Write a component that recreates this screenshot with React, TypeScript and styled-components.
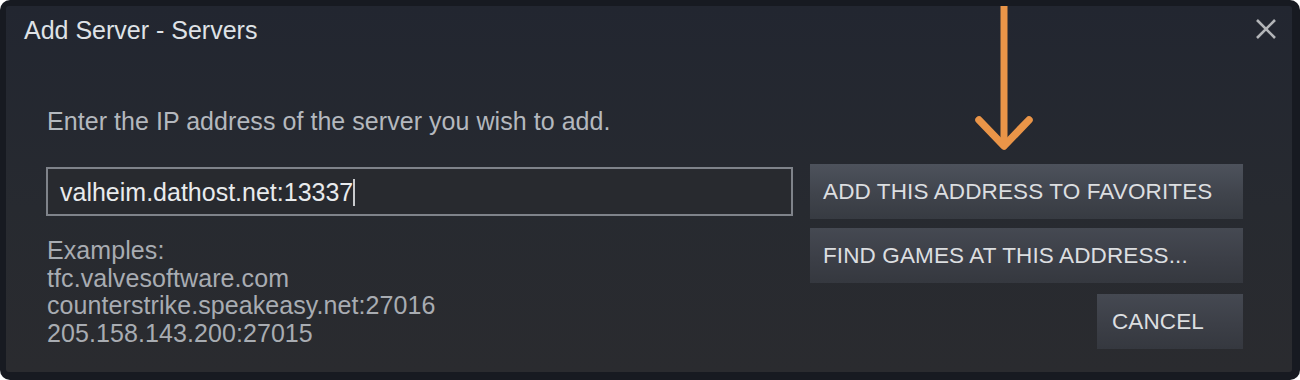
import React from "react";
import styled, { createGlobalStyle } from "styled-components";

const GlobalStyle = createGlobalStyle`
  html, body {
    margin: 0;
    padding: 0;
    background: #ffffff;
  }
  * { box-sizing: border-box; }
`;

const Frame = styled.div`
  width: 1300px;
  height: 380px;
  background: #171a21;
  border-radius: 10px;
  padding: 6px 8px 8px 6px;
  font-family: "Liberation Sans", Arial, sans-serif;
`;

const Panel = styled.div`
  position: relative;
  height: 100%;
  border-radius: 3px;
  background: linear-gradient(to bottom, #222630 0%, #272a30 55%, #2a2b2f 100%);
  display: flex;
  flex-direction: column;
`;

const Header = styled.div`
  display: flex;
  justify-content: space-between;
  align-items: flex-start;
  padding: 12px 15px 0 18px;
  height: 37px;
`;

const Title = styled.div`
  font-size: 25px;
  line-height: 25px;
  color: #dfe2e6;
`;

const CloseButton = styled.div`
  width: 22px;
  height: 22px;
  display: flex;
  align-items: center;
  justify-content: center;
  color: #b3b5b8;
`;

const Body = styled.div`
  padding: 0 49px 0 40px;
  display: flex;
  flex-direction: column;
`;

const Prompt = styled.div`
  margin-top: 66px;
  padding-left: 1px;
  font-size: 25px;
  line-height: 25px;
  letter-spacing: 0.05px;
  color: #b4b8be;
`;

const Row = styled.div`
  margin-top: 30px;
  display: flex;
  align-items: flex-start;
  gap: 17px;
`;

const LeftColumn = styled.div`
  width: 747px;
  display: flex;
  flex-direction: column;
`;

const AddressField = styled.div`
  margin-top: 3px;
  height: 49px;
  border: 2px solid #7f838a;
  background: #282a2f;
  display: flex;
  align-items: center;
  padding: 2px 0 0 12px;
  font-size: 25px;
  line-height: 25px;
  color: #e9ebed;
`;

const Caret = styled.span`
  display: inline-block;
  width: 2px;
  height: 27px;
  margin-top: -1px;
  background: #c9cbce;
`;

const Examples = styled.div`
  margin-top: 21px;
  padding-left: 1px;
  font-size: 25px;
  line-height: 27.5px;
  letter-spacing: 0.08px;
  color: #a8acb2;
`;

const ButtonColumn = styled.div`
  width: 433px;
  display: flex;
  flex-direction: column;
  align-items: flex-end;
`;

const Button = styled.div<{ $primary?: boolean; $width?: number; $gap?: number; $pad?: number }>`
  width: ${(p) => (p.$width ? `${p.$width}px` : "100%")};
  height: 55px;
  margin-top: ${(p) => p.$gap ?? 0}px;
  padding: 0 0 0 ${(p) => p.$pad ?? 13}px;
  display: flex;
  align-items: center;
  font-size: 22.5px;
  letter-spacing: 0.12px;
  color: #dcdee0;
  white-space: nowrap;
  background: ${(p) =>
    p.$primary
      ? "linear-gradient(to bottom, #4d525c 0%, #40444c 55%, #373b42 100%)"
      : "linear-gradient(to bottom, #454952 0%, #3c3f47 55%, #35383f 100%)"};
`;

const Arrow = styled.svg`
  position: absolute;
  left: 966px;
  top: 0;
  overflow: visible;
`;

export default function App() {
  return (
    <>
      <GlobalStyle />
      <Frame>
        <Panel>
          <Header>
            <Title>Add Server - Servers</Title>
            <CloseButton>
              <svg width="22" height="22" viewBox="0 0 22 22">
                <path
                  d="M2 2 L20 20 M20 2 L2 20"
                  stroke="currentColor"
                  strokeWidth="2.6"
                  fill="none"
                />
              </svg>
            </CloseButton>
          </Header>
          <Body>
            <Prompt>Enter the IP address of the server you wish to add.</Prompt>
            <Row>
              <LeftColumn>
                <AddressField>
                  valheim.dathost.net:13337
                  <Caret />
                </AddressField>
                <Examples>
                  Examples:
                  <br />
                  tfc.valvesoftware.com
                  <br />
                  counterstrike.speakeasy.net:27016
                  <br />
                  205.158.143.200:27015
                </Examples>
              </LeftColumn>
              <ButtonColumn>
                <Button $primary>ADD THIS ADDRESS TO FAVORITES</Button>
                <Button $gap={9}>FIND GAMES AT THIS ADDRESS...</Button>
                <Button $gap={11} $width={146} $pad={15}>
                  CANCEL
                </Button>
              </ButtonColumn>
            </Row>
          </Body>
          <Arrow width="64" height="150" viewBox="0 0 64 150">
            <path d="M32 0 L32 141" stroke="#ea9548" strokeWidth="7" fill="none" />
            <path
              d="M7 114 L32 140 L57 114"
              stroke="#ea9548"
              strokeWidth="7.5"
              strokeLinecap="round"
              strokeLinejoin="round"
              fill="none"
            />
          </Arrow>
        </Panel>
      </Frame>
    </>
  );
}
